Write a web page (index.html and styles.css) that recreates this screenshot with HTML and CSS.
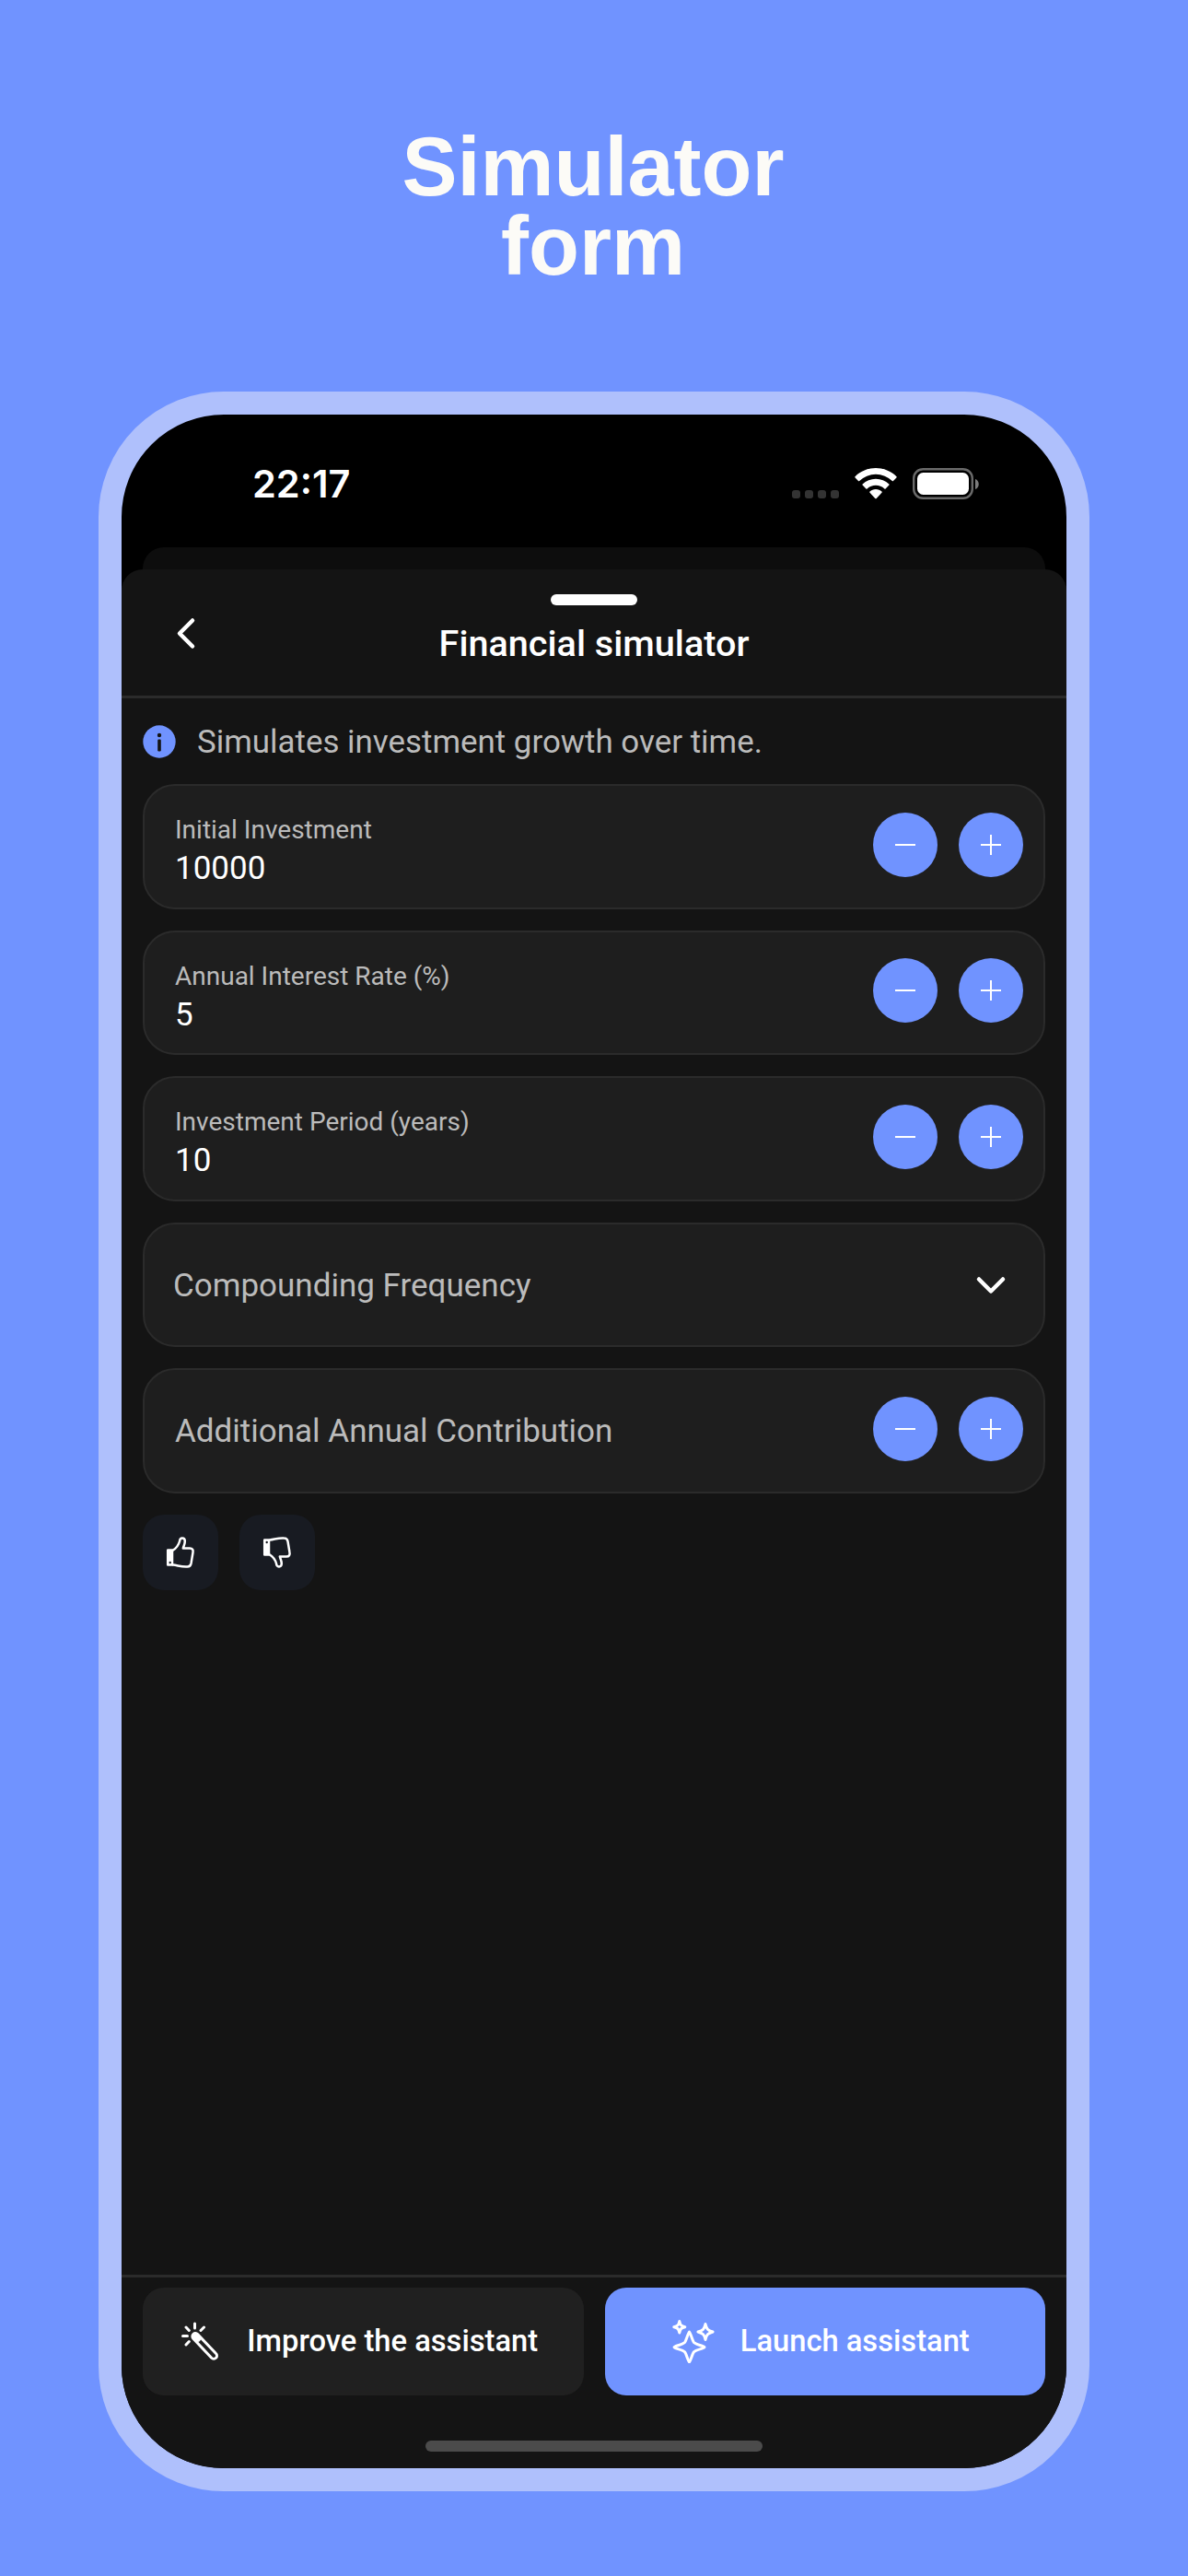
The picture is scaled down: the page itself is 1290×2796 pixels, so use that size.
FILE: index.html
```html
<!DOCTYPE html>
<html lang="en">
<head>
    <meta charset="UTF-8">
    <title>Financial simulator</title>
    <link rel="stylesheet" href="styles.css">
</head>
<body>
    <h1>Simulator<br>form</h1>
    <div class="phone">
        <div class="status-bar">
            <span class="time">22:17</span>
            <div class="status-icons">
                <div class="dots"><i></i><i></i><i></i><i></i></div>
                <svg class="wifi" width="46" height="34" viewBox="0 0 46 34">
                    <path d="M23 0C31.500 0 39.500 3.300 45.500 9.200Q46 9.800 45.400 10.400L42 14Q41.400 14.600 40.800 14A25.500 25.500 0 0 0 5.200 14Q4.600 14.600 4 14L.6 10.400Q0 9.800.5 9.200C6.500 3.300 14.500 0 23 0Z"/>
                    <path d="M23 11.700C28.500 11.700 33.500 13.800 37.400 17.400Q38 18 37.400 18.600L33.600 22.400Q33 23 32.400 22.400A13.900 13.900 0 0 0 13.600 22.400Q13 23 12.400 22.400L8.600 18.600Q8 18 8.600 17.400C12.500 13.800 17.500 11.700 23 11.700Z"/>
                    <path d="M23 23C25.600 23 27.800 24 29.500 25.600Q30 26.200 29.500 26.800L23.700 32.900Q23 33.500 22.300 32.900L16.500 26.800Q16 26.200 16.500 25.600C18.200 24 20.400 23 23 23Z"/>
                </svg>
                <svg class="battery" width="73" height="34" viewBox="0 0 73 34">
                    <rect x="1.200" y="1.200" width="63.600" height="31.600" rx="10" fill="none" stroke="#6a6a6a" stroke-width="2.400"/>
                    <rect x="5" y="5" width="56" height="24" rx="6.500" fill="#fff"/>
                    <path d="M68 12C73 13.500 73 21.500 68 23Z" fill="#7c7c7c"/>
                </svg>
            </div>
        </div>
        <div class="back-sheet"></div>
        <div class="sheet">
            <div class="sheet-header">
                <svg class="back" width="24" height="36" viewBox="0 0 24 36"><path d="M20 4.500L6 18.500L20 32.500"/></svg>
                <div class="header-middle">
                    <div class="grabber"></div>
                    <h2>Financial simulator</h2>
                </div>
            </div>

            <div class="content">
                <div class="info">
                    <svg width="36" height="36" viewBox="0 0 36 36">
                        <circle cx="18" cy="18" r="17.700" fill="#7093ff"/>
                        <circle cx="18" cy="11" r="2.200" fill="#141414"/>
                        <rect x="16.200" y="15.500" width="3.600" height="13" rx="1.200" fill="#141414"/>
                    </svg>
                    <span>Simulates investment growth over time.</span>
                </div>

                <div class="field">
                    <div class="field-text"><label>Initial Investment</label><b>10000</b></div>
                    <button class="step minus"></button>
                    <button class="step plus"></button>
                </div>
                <div class="field">
                    <div class="field-text"><label>Annual Interest Rate (%)</label><b>5</b></div>
                    <button class="step minus"></button>
                    <button class="step plus"></button>
                </div>
                <div class="field">
                    <div class="field-text"><label>Investment Period (years)</label><b>10</b></div>
                    <button class="step minus"></button>
                    <button class="step plus"></button>
                </div>
                <div class="field select">
                    <span class="placeholder">Compounding Frequency</span>
                    <svg width="34" height="22" viewBox="0 0 34 22"><path d="M4 4.500L17 17.500L30 4.500"/></svg>
                </div>
                <div class="field">
                    <span class="placeholder">Additional Annual Contribution</span>
                    <button class="step minus"></button>
                    <button class="step plus"></button>
                </div>

                <div class="votes">
                    <button class="vote">
                        <svg width="32" height="36" viewBox="0 0 32 36">
                            <path d="M2.200 15.500H7V31.500H2.200Z" fill="#fff"/>
                            <circle cx="4.700" cy="29" r="1.200" fill="#181b22" stroke="none"/>
                            <path d="M8 15.500C12 13 14 9.500 15 6C15.300 1.500 20.500 1.500 20.800 5.500C21 8.500 19.500 11 18.800 13.500H26C29 13.500 30 15.500 29.500 18L27.500 30C27 32.500 26 33.500 23.500 33.500C17 34 13 32 8 31.500"/>
                        </svg>
                    </button>
                    <button class="vote down">
                        <svg width="32" height="36" viewBox="0 0 32 36">
                            <g transform="matrix(1 0 0 -1 0 36)">
                                <path d="M2.200 15.500H7V31.500H2.200Z" fill="#fff"/>
                                <circle cx="4.700" cy="29" r="1.200" fill="#181b22" stroke="none"/>
                                <path d="M8 15.500C12 13 14 9.500 15 6C15.300 1.500 20.500 1.500 20.800 5.500C21 8.500 19.500 11 18.800 13.500H26C29 13.500 30 15.500 29.500 18L27.500 30C27 32.500 26 33.500 23.500 33.500C17 34 13 32 8 31.500"/>
                            </g>
                        </svg>
                    </button>
                </div>
            </div>

            <div class="footer">
                <button class="action">
                    <svg class="wand" width="40" height="42" viewBox="0 0 40 42">
                        <path d="M14.500 2V7M5 6L8.300 9.500M24.500 6L21 9.500M1.500 15.500H6.500M5 25L8.300 21.500"/>
                        <path d="M12.800 18.200A3.300 3.300 0 0 1 17.600 13.600L37.500 34.500A3.300 3.300 0 0 1 32.700 39.300Z"/>
                        <path d="M15.200 15.800L18 18.800" stroke-width="6"/>
                    </svg>
                    <span>Improve the assistant</span>
                </button>
                <button class="action launch">
                    <svg class="sparkles" width="48" height="48" viewBox="0 0 48 48">
                        <path d="M19.500 14C18.500 14 16.500 23 14.500 25.500C12 28 3 29.500 3 30.700C3 32 12 33.300 14.500 35.800C16.500 38.300 18.500 47 19.500 47C20.500 47 22.500 38.300 24.500 35.800C27 33.300 36 32 36 30.700C36 29.500 27 28 24.500 25.500C22.500 23 20.500 14 19.500 14Z"/>
                        <path d="M37 5.500C38.300 11 39.500 12.300 45 14C39.500 15.700 38.300 17 37 22.500C35.700 17 34.500 15.700 29 14C34.500 12.300 35.700 11 37 5.500Z"/>
                        <path d="M8.800 2.500C9.800 6.800 10.500 7.500 14.800 8.700C10.500 9.900 9.800 10.600 8.800 15C7.800 10.600 7.100 9.900 2.800 8.700C7.100 7.500 7.800 6.800 8.800 2.500Z"/>
                    </svg>
                    <span>Launch assistant</span>
                </button>
            </div>
            <div class="home-indicator"></div>
        </div>
    </div>
</body>
</html>
```
FILE: styles.css
```css
* { box-sizing: border-box; }
body { margin: 0; height: 2796px; background: #7093ff; font-family: Roboto, sans-serif; color: #fff; overflow: hidden; }
h1 { margin: 0; padding: 138px 2px 0 0; height: 425px; font: bold 90px/86px "Liberation Sans", Arial, sans-serif; color: #fcfbf7; text-align: center; }
button { border: none; padding: 0; margin: 0; font-family: inherit; color: #fff; }
svg { display: block; flex: none; fill: none; stroke-linecap: round; stroke-linejoin: round; }

.phone { width: 1076px; height: 2279px; margin: 0 auto; border: 25px solid #afc0fc; border-radius: 136px; background: #000; overflow: hidden; display: flex; flex-direction: column; }

.status-bar { height: 144px; padding: 58px 94px 0 142px; display: flex; justify-content: space-between; }
.time { font: 600 41.500px/35px Inter, sans-serif; }
.status-icons { display: flex; height: 34px; }
.dots { display: flex; gap: 5px; padding-top: 24px; margin-right: 17px; }
.dots i { width: 9px; height: 9px; border-radius: 3px; background: #333; }
.wifi { margin-right: 17px; fill: #fff; }

.back-sheet { height: 24px; margin: 0 23px; border-radius: 23px 23px 0 0; background: #0d0d0d; }
.sheet { flex: 1; border-radius: 23px 23px 0 0; background: #141414; display: flex; flex-direction: column; }
.sheet-header { height: 140px; border-bottom: 3px solid #2b2b2b; display: flex; padding: 0 57px; }
.back { margin-top: 51px; stroke: #fff; stroke-width: 4.500; }
.header-middle { flex: 1; margin-right: 24px; padding-top: 27px; display: flex; flex-direction: column; align-items: center; }
.grabber { width: 94px; height: 12px; border-radius: 6px; background: #fff; }
h2 { margin: 18px 0 0; font-size: 39.600px; line-height: 48px; font-weight: 500; }

.content { flex: 1; padding: 29px 23px 0; display: flex; flex-direction: column; }
.info { display: flex; align-items: center; gap: 23px; height: 36px; margin-bottom: 28px; font-size: 34.900px; color: #bbb; }
.field { height: 135.500px; flex: none; margin-bottom: 23px; padding: 0 22px 4px 33px; border: 2px solid #2b2b2b; border-radius: 35px; background: #1e1e1e; display: flex; align-items: center; gap: 23px; }
.field-text, .placeholder { flex: 1; }
.field-text { display: flex; flex-direction: column; padding-top: 15px; }
.field-text label { font-size: 28px; line-height: 38px; color: #bbb; }
.field-text b { font-size: 35px; line-height: 46px; font-weight: 400; }
.placeholder { font-size: 35px; color: #bbb; padding-top: 6px; }
.select { padding-left: 31px; padding-right: 40px; }
.select svg { stroke: #fff; stroke-width: 4.500; margin-top: 5px; }

.step { width: 70px; height: 70px; border-radius: 50%; background: #7093ff; display: flex; align-items: center; justify-content: center; }
.step::before { content: ""; width: 22px; height: 22px; background: linear-gradient(#fff, #fff) center / 22px 2px no-repeat; }
.plus::before { background: linear-gradient(#fff, #fff) center / 22px 2px no-repeat, linear-gradient(#fff, #fff) center / 2px 22px no-repeat; }

.votes { display: flex; gap: 23px; }
.vote { width: 82px; height: 82px; border-radius: 23px; background: #181b22; display: flex; align-items: center; justify-content: center; }
.vote svg { stroke: #fff; stroke-width: 2.500; }

.footer { border-top: 3px solid #2b2b2b; padding: 11px 23px 0; display: flex; gap: 23px; }
.action { flex: 1; height: 117px; padding: 0 7px 2px 0; border-radius: 23px; background: #202020; display: flex; align-items: center; justify-content: center; gap: 31px; font-size: 32.700px; font-weight: 500; }
.action svg { stroke: #fff; stroke-width: 3; }
.launch { background: #7093ff; gap: 27px; }
.launch span { margin-right: 3px; }
.home-indicator { width: 366px; height: 12px; margin: 49px auto 18px; border-radius: 6px; background: #4b4b4b; }
```
